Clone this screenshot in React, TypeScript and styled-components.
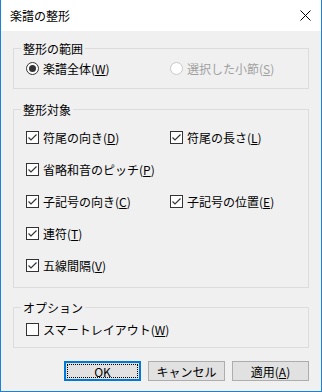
import React from "react";
import styled, { createGlobalStyle } from "styled-components";

const Global = createGlobalStyle`
  html, body { margin: 0; padding: 0; background: #ffffff; }
  body { font-family: "Noto Sans CJK JP", "Noto Sans", sans-serif; font-size: 12px; color: #000; }
`;

const Window = styled.div`
  width: 322px;
  height: 392px;
  box-sizing: border-box;
  border-left: 1px solid #1883d7;
  border-right: 1px solid #1883d7;
  border-bottom: 1px solid #1883d7;
  background: #f0f0f0;
  display: flex;
  flex-direction: column;
`;

const TitleBar = styled.div`
  height: 31px;
  flex: none;
  background: #ffffff;
  display: flex;
  align-items: center;
  justify-content: space-between;
  padding: 0 10px 0 9px;
`;

const Title = styled.span`
  font-size: 12px;
  line-height: 15px;
  color: #000;
`;

const Client = styled.div`
  display: flex;
  flex-direction: column;
  padding: 10px 12px 0 12px;
`;

const Group = styled.fieldset<{ $pt: number; $pb: number; $mt?: number }>`
  margin: ${(p) => p.$mt ?? 0}px 0 0 0;
  padding: ${(p) => p.$pt}px 0 ${(p) => p.$pb}px 12px;
  border: 1px solid #dcdcdc;
  min-width: 0;
`;

const Legend = styled.legend`
  padding: 0 2px;
  margin-left: -5px;
  line-height: 15px;
  font-size: 12px;
`;

const Grid = styled.div`
  display: grid;
  grid-template-columns: 144px 1fr;
  row-gap: 16px;
`;

const Item = styled.label<{ $disabled?: boolean; $span?: boolean }>`
  display: flex;
  align-items: center;
  gap: 4px;
  height: 16px;
  line-height: 15px;
  white-space: nowrap;
  color: ${(p) => (p.$disabled ? "#a0a0a0" : "#000")};
  grid-column: ${(p) => (p.$span ? "1 / -1" : "auto")};
`;

const RadioCircle = styled.span<{ $disabled?: boolean; $checked?: boolean }>`
  width: 13px;
  height: 13px;
  box-sizing: border-box;
  border-radius: 50%;
  border: 1px solid ${(p) => (p.$disabled ? "#c8c8c8" : "#333333")};
  background: #ffffff;
  display: flex;
  align-items: center;
  justify-content: center;
  flex: none;
  &::after {
    content: "";
    display: ${(p) => (p.$checked ? "block" : "none")};
    width: 7px;
    height: 7px;
    border-radius: 50%;
    background: #333333;
  }
`;

const Box = styled.span`
  width: 13px;
  height: 13px;
  box-sizing: border-box;
  border: 1px solid #333333;
  background: #ffffff;
  display: flex;
  align-items: center;
  justify-content: center;
  flex: none;
`;

const Buttons = styled.div`
  display: flex;
  justify-content: flex-end;
  gap: 7px;
  margin-top: 13px;
  padding-right: 0;
`;

const Button = styled.button<{ $default?: boolean }>`
  width: 77px;
  height: 20px;
  box-sizing: border-box;
  margin: 0;
  padding: 0;
  background: #e1e1e1;
  border: ${(p) => (p.$default ? "2px solid #0078d7" : "1px solid #adadad")};
  font-family: "Noto Sans CJK JP", "Noto Sans", sans-serif;
  font-size: 12px;
  line-height: 15px;
  color: #000;
  display: flex;
  align-items: center;
  justify-content: center;
  position: relative;
  ${(p) =>
    p.$default
      ? `&::after { content: ""; position: absolute; inset: 1px; border: 1px dotted #000; }`
      : ""}
`;

const Check = () => (
  <svg width="11" height="11" viewBox="0 0 11 11">
    <path d="M1.5 5.5 L4 8 L9.5 2.5" fill="none" stroke="#333" strokeWidth="1.2" />
  </svg>
);

const CloseIcon = () => (
  <svg width="11" height="11" viewBox="0 0 11 11">
    <path d="M0.5 0.5 L10.5 10.5 M10.5 0.5 L0.5 10.5" stroke="#000" strokeWidth="1" />
  </svg>
);

const CheckItem: React.FC<{ text: string; m: string; checked?: boolean; span?: boolean }> = ({
  text,
  m,
  checked = true,
  span,
}) => (
  <Item $span={span}>
    <Box>{checked && <Check />}</Box>
    <span>
      {text}(<u>{m}</u>)
    </span>
  </Item>
);

export default function App() {
  return (
    <>
      <Global />
      <Window>
        <TitleBar>
          <Title>楽譜の整形</Title>
          <CloseIcon />
        </TitleBar>
        <Client>
          <Group $pt={4} $pb={12}>
            <Legend>整形の範囲</Legend>
            <Grid>
              <Item>
                <RadioCircle $checked />
                <span>
                  楽譜全体(<u>W</u>)
                </span>
              </Item>
              <Item $disabled>
                <RadioCircle $disabled />
                <span>
                  選択した小節(<u>S</u>)
                </span>
              </Item>
            </Grid>
          </Group>
          <Group $pt={12} $pb={14} $mt={13}>
            <Legend>整形対象</Legend>
            <Grid>
              <CheckItem text="符尾の向き" m="D" />
              <CheckItem text="符尾の長さ" m="L" />
              <CheckItem text="省略和音のピッチ" m="P" span />
              <CheckItem text="子記号の向き" m="C" />
              <CheckItem text="子記号の位置" m="E" />
              <CheckItem text="連符" m="T" span />
              <CheckItem text="五線間隔" m="V" span />
            </Grid>
          </Group>
          <Group $pt={6} $pb={10} $mt={12}>
            <Legend>オプション</Legend>
            <Grid>
              <CheckItem text="スマートレイアウト" m="W" checked={false} span />
            </Grid>
          </Group>
          <Buttons>
            <Button $default>OK</Button>
            <Button>キャンセル</Button>
            <Button>
              <span>
                適用(<u>A</u>)
              </span>
            </Button>
          </Buttons>
        </Client>
      </Window>
    </>
  );
}
